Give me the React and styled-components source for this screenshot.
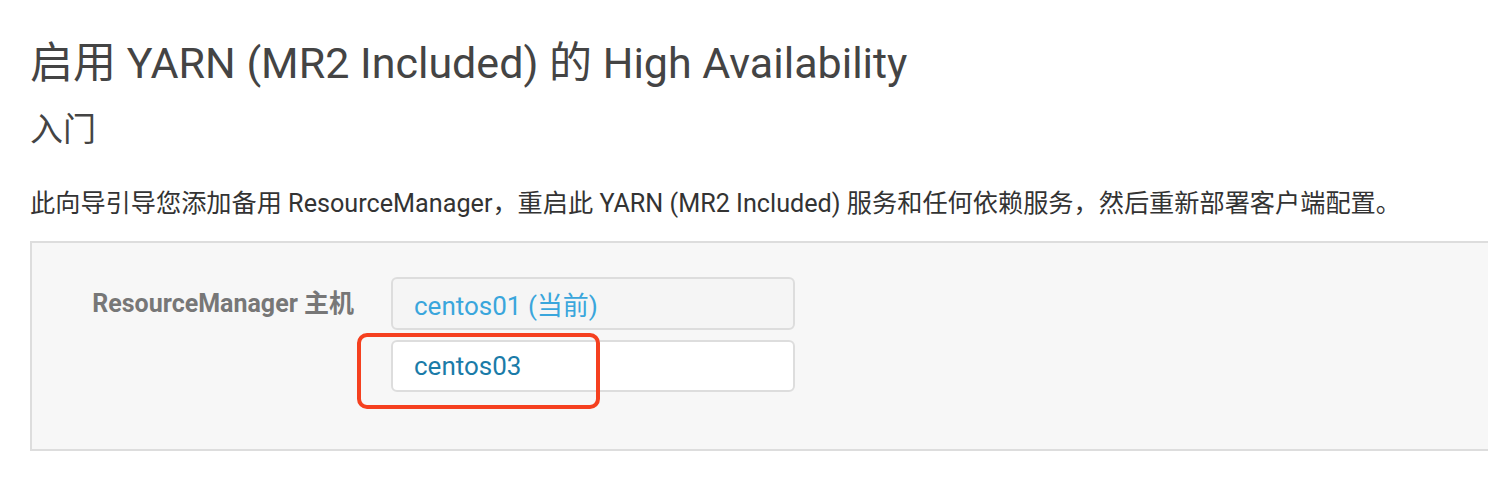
import React from "react";
import styled, { createGlobalStyle } from "styled-components";

const Global = createGlobalStyle`
  html, body { margin: 0; padding: 0; background: #fff; overflow: hidden; }
  body { font-family: Roboto, "Noto Sans CJK SC", sans-serif; color: #444; }
`;

const Page = styled.div`
  padding: 33px 0 0 30px;
`;

const Title = styled.h1`
  margin: 0;
  font-size: 43px;
  font-weight: 400;
  line-height: 60px;
  color: #444;
  white-space: nowrap;
`;

const Subtitle = styled.h2`
  margin: 15px 0 0;
  font-size: 33px;
  font-weight: 400;
  line-height: 44px;
  color: #444;
`;

const Intro = styled.p`
  margin: 35px 0 0;
  font-size: 25.2px;
  line-height: 34px;
  color: #333;
  white-space: nowrap;
`;

const Panel = styled.div`
  margin-top: 20px;
  margin-right: -10px;
  background: #f7f7f7;
  border: 2px solid #ddd;
  border-right: none;
  padding: 34px 0 57px;
`;

const Row = styled.div`
  display: grid;
  grid-template-columns: 322px 404px;
  column-gap: 37px;
  align-items: start;
`;

const Label = styled.label`
  text-align: right;
  font-size: 25px;
  font-weight: 700;
  color: #777;
  line-height: 53px;
  white-space: nowrap;
`;

const Fields = styled.div`
  display: flex;
  flex-direction: column;
  gap: 10px;
`;

const Field = styled.div`
  position: relative;
  box-sizing: border-box;
  height: ${(p) => (p.$tall ? 53 : 52)}px;
  border: 2px solid #ddd;
  border-radius: 6px;
  background: ${(p) => (p.$disabled ? "#f5f5f5" : "#fff")};
  padding: 0 21px;
  display: flex;
  align-items: center;
  font-size: 26px;
  color: ${(p) => (p.$disabled ? "#3aa6dc" : "#1a7ba8")};
`;

const Highlight = styled.div`
  position: absolute;
  left: -36px;
  top: -9px;
  width: 243px;
  height: 76px;
  box-sizing: border-box;
  border: 4px solid #f5401f;
  border-radius: 10px;
  pointer-events: none;
`;

export default function App() {
  return (
    <>
      <Global />
      <Page>
        <Title>启用 YARN (MR2 Included) 的 High Availability</Title>
        <Subtitle>入门</Subtitle>
        <Intro>
          此向导引导您添加备用 ResourceManager，重启此 YARN (MR2 Included) 服务和任何依赖服务，然后重新部署客户端配置。
        </Intro>
        <Panel>
          <Row>
            <Label>ResourceManager 主机</Label>
            <Fields>
              <Field $disabled $tall>centos01 (当前)</Field>
              <Field>
                centos03
                <Highlight />
              </Field>
            </Fields>
          </Row>
        </Panel>
      </Page>
    </>
  );
}
